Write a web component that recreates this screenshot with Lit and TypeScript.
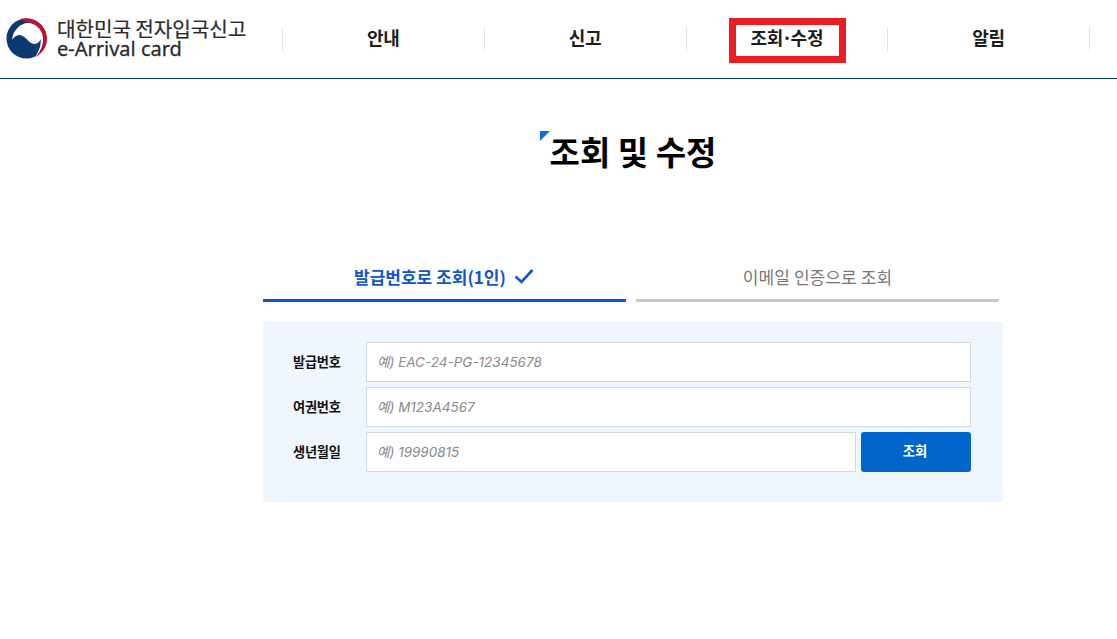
import { LitElement, html, css } from "lit";
import { customElement } from "lit/decorators.js";

const FONT = css`"Noto Sans CJK KR", "Noto Sans", sans-serif`;

@customElement("app-root")
export class AppRoot extends LitElement {
  static styles = css`
    :host { display: block; width: 1117px; height: 639px; background: #fff; font-family: ${FONT}; color: #111; overflow: hidden; }
    * { box-sizing: border-box; }
    .header { height: 79px; border-bottom: 1px solid #003b7c; display: flex; align-items: flex-start; padding-left: 6px; }
    .logo { width: 276px; flex: none; display: flex; gap: 10px; padding-top: 18px; }
    .logo svg { width: 41px; height: 41px; flex: none; }
    .brand { display: flex; flex-direction: column; color: #2b2b2e; }
    .brand .ko { font-size: 20.200px; line-height: 21px; font-weight: 400; letter-spacing: -0.1px; white-space: nowrap; -webkit-text-stroke: 0.2px #2b2b2e; }
    .brand .en { font-size: 20px; line-height: 20px; font-weight: 400; font-family: "Noto Sans", sans-serif; white-space: nowrap; -webkit-text-stroke: 0.3px #2b2b2e; }
    .nav { display: grid; grid-template-columns: repeat(4, 201.75px); grid-template-rows: 24px; border-right: 1px solid #e2e2e2; margin-top: 27px; height: 24px; }
    .nav-item { position: relative; border-left: 1px solid #e2e2e2; display: flex; align-items: center; justify-content: center; font-size: 18px; line-height: 18px; font-weight: 700; color: #1c1c20; letter-spacing: -0.2px; padding-bottom: 5px; }
    .mark { position: absolute; left: 42px; top: -9px; width: 117px; height: 45px; border: 7px solid #ed1c24; }
    .dot { margin: 0 -1.5px; }
    .main { width: 740px; margin-left: 263px; }
    .title-row { display: flex; justify-content: center; padding-top: 49px; }
    h1 { position: relative; margin: 0; font-size: 33px; line-height: 46px; font-weight: 700; color: #000; }
    h1::before { content: ""; position: absolute; left: -10px; top: 3px; width: 0; height: 0; border-top: 10px solid #0b6fdc; border-right: 10px solid transparent; }
    .tabs { display: flex; gap: 10px; margin-top: 81px; width: 736px; }
    .tab { flex: 1; height: 47px; display: flex; align-items: center; justify-content: center; gap: 7px; font-size: 17px; padding-bottom: 2px; border-bottom: 3px solid #c8c8c8; color: #777; font-weight: 400; letter-spacing: 0.1px; }
    .tab.on { border-bottom-color: #0f56c8; color: #0f56c8; font-weight: 700; letter-spacing: 0; }
    .tab svg { width: 22px; height: 16px; flex: none; }
    .panel { margin-top: 20px; background: #eff6fd; padding: 20px 32px 30px 30px; height: 180px; display: flex; flex-direction: column; gap: 5px; }
    .row { display: flex; align-items: center; height: 40px; }
    .row label { width: 73px; flex: none; font-size: 13.200px; font-weight: 700; color: #111; letter-spacing: -0.2px; padding-bottom: 2px; }
    .field { flex: 1; height: 40px; border: 1px solid #d5d8dc; background: #fff; display: flex; align-items: center; padding: 0 0 3px 10px; font-size: 13.500px; font-style: italic; color: #8a8a8a; font-family: Inter, "Noto Sans CJK KR", sans-serif; }
    .btn { width: 110px; height: 40px; margin-left: 5px; flex: none; background: #0066cc; color: #fff; border-radius: 3px; display: flex; align-items: center; justify-content: center; font-size: 13.300px; font-weight: 700; padding: 0 2px 3px 0; }
  `;

  render() {
    return html`
      <div class="header">
        <div class="logo">
          <svg viewBox="0 0 41 41">
            <circle cx="20.5" cy="20.5" r="20" fill="#0b3a6e"/>
            <path d="M6 22C6.500 13 14 5 22 5 31 5 38 13 37 23 36.500 30 33 36 29 39.500 33 33 35.500 27 34.500 21 33 26.500 27 27.500 23 23.500 19 19 15 15.500 11 17.500 9 18.500 7 20 6 22Z" fill="#fff"/>
            <path d="M14 1.100C19 -0.500 27 0 33 5 38.500 9.500 41 15 41 21 41 28 37 35 29 39.500 36 33 38.500 25 37.500 19 36 11 29 5 21 4 18.500 3.500 16 2.500 14 1.100Z" fill="#c8102e"/>
          </svg>
          <div class="brand">
            <div class="ko">대한민국 전자입국신고</div>
            <div class="en">e-Arrival card</div>
          </div>
        </div>
        <div class="nav">
          <div class="nav-item">안내</div>
          <div class="nav-item">신고</div>
          <div class="nav-item"><span class="mark"></span>조회<span class="dot">·</span>수정</div>
          <div class="nav-item">알림</div>
        </div>
      </div>
      <div class="main">
        <div class="title-row"><h1>조회 및 수정</h1></div>
        <div class="tabs">
          <div class="tab on">발급번호로 조회(1인)
            <svg viewBox="0 0 22 16"><path d="M2.500 8.500 8.500 14 19.500 2" fill="none" stroke="#0f56c8" stroke-width="2.600"/></svg>
          </div>
          <div class="tab">이메일 인증으로 조회</div>
        </div>
        <div class="panel">
          <div class="row"><label>발급번호</label><div class="field">예) EAC-24-PG-12345678</div></div>
          <div class="row"><label>여권번호</label><div class="field">예) M123A4567</div></div>
          <div class="row"><label>생년월일</label><div class="field">예) 19990815</div><div class="btn">조회</div></div>
        </div>
      </div>
    `;
  }
}
